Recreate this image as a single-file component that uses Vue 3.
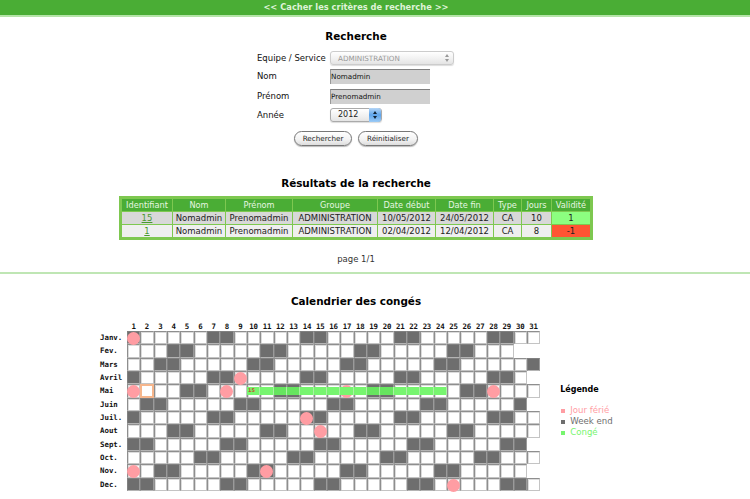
<script setup>
const months = ['Janv.', 'Fev.', 'Mars', 'Avril', 'Mai', 'Juin', 'Juil.', 'Aout', 'Sept.', 'Oct.', 'Nov.', 'Dec.']
const feries = { 0: [1], 3: [9], 4: [1, 8, 17, 28], 6: [14], 7: [15], 10: [1, 11], 11: [25] }
const days = Array.from({ length: 31 }, (_, i) => i + 1)

function cellsFor(m) {
  const count = new Date(2012, m + 1, 0).getDate()
  return days.map((d) => {
    if (d > count) return { d, cls: ['cell', 'none'] }
    const wd = new Date(2012, m, d).getDay()
    const conge = m === 4 && d >= 10 && d <= 24
    return {
      d,
      cls: ['cell', { we: wd === 0 || wd === 6, today: m === 4 && d === 2 }],
      ferie: (feries[m] || []).includes(d),
      conge,
      first: m === 4 && d === 10
    }
  })
}
const rows = months.map((name, m) => ({ name, cells: cellsFor(m) }))

const results = [
  { id: '15', nom: 'Nomadmin', prenom: 'Prenomadmin', groupe: 'ADMINISTRATION', debut: '10/05/2012', fin: '24/05/2012', type: 'CA', jours: '10', val: '1', vc: 'ok', rc: 'odd' },
  { id: '1', nom: 'Nomadmin', prenom: 'Prenomadmin', groupe: 'ADMINISTRATION', debut: '02/04/2012', fin: '12/04/2012', type: 'CA', jours: '8', val: '-1', vc: 'ko', rc: 'even' }
]
</script>

<template>
  <div class="page">
    <div class="topbar"><span class="inner">&lt;&lt; Cacher les critères de recherche &gt;&gt;</span></div>

    <h2 class="h-search">Recherche</h2>
    <form class="form" @submit.prevent>
      <div class="frow r1">
        <span class="lab">Equipe / Service</span>
        <div class="sel sel-big"><span>ADMINISTRATION</span>
          <svg width="6" height="10" viewBox="0 0 6 10"><path d="M3 1l2 3H1zM3 9L1 6h4z" fill="#999" /></svg>
        </div>
      </div>
      <div class="frow r2"><span class="lab">Nom</span><div class="inp">Nomadmin</div></div>
      <div class="frow r3"><span class="lab">Prénom</span><div class="inp">Prenomadmin</div></div>
      <div class="frow r4">
        <span class="lab">Année</span>
        <div class="sel sel-year"><span>2012</span>
          <i class="spin"><svg width="6" height="10" viewBox="0 0 6 10"><path d="M3 1l2 3H1zM3 9L1 6h4z" fill="#123" /></svg></i>
        </div>
      </div>
      <div class="btns">
        <button type="button" class="btn b1">Rechercher</button>
        <button type="button" class="btn b2">Réinitialiser</button>
      </div>
    </form>

    <h2 class="h-res">Résultats de la recherche</h2>
    <div class="tablewrap">
      <table class="res">
        <thead>
          <tr>
            <th class="c1">Identifiant</th><th class="c2">Nom</th><th class="c3">Prénom</th><th class="c4">Groupe</th>
            <th class="c5">Date début</th><th class="c6">Date fin</th><th class="c7">Type</th><th class="c8">Jours</th><th class="c9">Validité</th>
          </tr>
        </thead>
        <tbody>
          <tr v-for="r in results" :key="r.id" :class="r.rc">
            <td><a href="#" @click.prevent>{{ r.id }}</a></td>
            <td>{{ r.nom }}</td><td>{{ r.prenom }}</td><td>{{ r.groupe }}</td>
            <td>{{ r.debut }}</td><td>{{ r.fin }}</td><td>{{ r.type }}</td><td>{{ r.jours }}</td>
            <td :class="r.vc">{{ r.val }}</td>
          </tr>
        </tbody>
      </table>
    </div>
    <div class="pager">page 1/1</div>
    <div class="sep"></div>

    <h2 class="h-cal">Calendrier des congés</h2>
    <div class="calzone">
      <div class="cal">
        <div class="crow head">
          <span class="mon"></span>
          <span v-for="d in days" :key="d" class="num">{{ d }}</span>
        </div>
        <div v-for="r in rows" :key="r.name" class="crow">
          <span class="mon">{{ r.name }}</span>
          <span v-for="c in r.cells" :key="c.d" :class="c.cls">
            <i v-if="c.ferie" class="dot"></i>
            <i v-if="c.conge" class="band"></i>
            <b v-if="c.first" class="tag">15</b>
          </span>
        </div>
      </div>
      <div class="legend">
        <div class="leg-t">Légende</div>
        <div class="leg-i l-f"><i></i>Jour férié</div>
        <div class="leg-i l-w"><i></i>Week end</div>
        <div class="leg-i l-c"><i></i>Congé</div>
      </div>
    </div>
  </div>
</template>

<style>
html, body { margin: 0; background: #fff; overflow: hidden; }
</style>

<style scoped>
.page { width: 750px; height: 499px; overflow: hidden; font-family: "DejaVu Sans", Verdana, sans-serif; color: #111; font-size: 9px; }
.topbar { height: 15px; background: #4aad35; border-bottom: 2px solid #b5e4a8; color: #dff3d8; font-weight: bold; font-size: 8.3px; line-height: 15px; }
.inner { display: block; width: 712px; text-align: center; }
h2 { margin: 0; width: 712px; text-align: center; font-size: 10.4px; font-weight: bold; color: #000; line-height: 14px; }
.h-search { margin-top: 12px; }
.form { display: flex; flex-direction: column; width: 200px; margin: 7px 0 0 257px; }
.frow { display: flex; align-items: center; }
.lab { width: 73px; flex: none; font-size: 8.5px; }
.r1 { height: 16px; }
.r2 { height: 20px; }
.r3 { height: 20px; }
.r4 { height: 17px; }
.sel { height: 14px; box-sizing: border-box; border: 1px solid #ccc; border-radius: 3px; background: linear-gradient(#fff, #f0f0f0 60%, #e4e4e4); display: flex; align-items: center; justify-content: space-between; padding-left: 7px; font-size: 7.2px; box-shadow: 0 1px 1px #ddd; }
.sel-big { width: 124px; color: #999; padding-right: 3px; }
.sel-year { width: 52px; color: #222; border-color: #aaa; font-size: 8px; }
.spin { width: 12px; height: 14px; background: linear-gradient(#b5d6f7, #5ea4ea 50%, #9ccbf6); border-radius: 0 3px 3px 0; display: flex; align-items: center; justify-content: center; }
.inp { width: 100px; height: 15px; box-sizing: border-box; background: #d0d0d0; border-top: 1px solid #808080; border-left: 1px solid #999; font-size: 7.2px; line-height: 14px; color: #111; }
.btns { display: flex; gap: 6px; margin: 8px 0 0 37px; }
.btn { height: 15px; box-sizing: border-box; padding: 0; border: 1px solid #777; border-radius: 8px; background: linear-gradient(#fff, #f2f2f2 60%, #ddd); font: 7.2px "DejaVu Sans", Verdana, sans-serif; color: #222; box-shadow: 0 1px 1px #bbb; }
.b1 { width: 58px; }
.b2 { width: 60px; }
.h-res { margin-top: 30px; }
.tablewrap { display: flex; justify-content: center; width: 712px; margin-top: 6px; }
.res { border-collapse: separate; border-spacing: 1px; background: #7ec850; border: 2px solid #7ec850; table-layout: fixed; width: 474px; font-size: 8.5px; }
.res th { background: #4aad35; color: #e6f6e0; font-weight: normal; font-size: 8.2px; height: 12px; padding: 0; line-height: 12px; text-align: center; }
.res td { height: 12px; padding: 0; line-height: 12px; text-align: center; color: #222; white-space: nowrap; overflow: hidden; }
.res .odd td { background: #d8d8d8; }
.res .even td { background: #efefef; }
.res td.ok, .res .odd td.ok { background: #8cff80; }
.res td.ko, .res .even td.ko { background: #ff5533; }
.res a { color: #4a9a30; }
.c1 { width: 50px; } .c2 { width: 52px; } .c3 { width: 66px; } .c4 { width: 84px; } .c5 { width: 57px; } .c6 { width: 57px; } .c7 { width: 27px; } .c8 { width: 29px; } .c9 { width: 38px; }
.pager { width: 712px; text-align: center; font-size: 8.5px; color: #333; margin-top: 13px; height: 12px; line-height: 12px; }
.sep { height: 2px; margin-top: 7px; background: #bfe6b4; }
.h-cal { margin-top: 20px; }
.calzone { display: flex; margin-top: 14px; padding-left: 100px; align-items: flex-start; }
.cal { flex: none; }
.crow { display: flex; height: 13.33px; }
.head { height: 9px; }
.mon { width: 27px; flex: none; font-family: "DejaVu Sans Mono", monospace; font-weight: bold; font-size: 7.4px; line-height: 13px; }
.num { width: 13.33px; flex: none; text-align: center; font-family: "DejaVu Sans Mono", monospace; font-weight: bold; font-size: 7.4px; line-height: 10px; letter-spacing: -.2px; }
.cell { position: relative; width: 13.33px; height: 13.33px; flex: none; box-sizing: border-box; background: #fff; border: 1px solid #8e8e8e; border-right-color: #c4c4c4; border-bottom-color: #c4c4c4; box-shadow: inset 1px 1px 0 #dcdcdc; }
.cell.none { background: #fff; border: 0; box-shadow: none; }
.cell.we { background: #6e6e6e; border-color: #808080; border-right-color: #9a9a9a; border-bottom-color: #b4b4b4; box-shadow: none; }
.cell.today { border: 2px solid #f6b68c; box-shadow: inset 0 0 0 0 transparent; }
.dot { position: absolute; left: -1px; top: 0; width: 13px; height: 13px; border-radius: 50%; background: #ff9da3; z-index: 1; }
.band { position: absolute; left: -1px; right: -1px; top: 2px; height: 8px; background: #77f56f; border-right: 1px solid #a9f2a3; box-sizing: border-box; z-index: 2; }
.cell.we .band { background: #66e55f; }
.tag { position: absolute; left: 0; top: 2px; font: bold 5px/7px "DejaVu Sans", sans-serif; color: #c4502c; z-index: 3; }
.legend { margin-left: 20px; margin-top: 62px; font-size: 8.6px; }
.leg-t { font-weight: bold; color: #000; font-size: 8px; line-height: 11px; margin-bottom: 10px; }
.leg-i { height: 11px; line-height: 11px; display: flex; align-items: center; gap: 5px; padding-left: 1px; }
.leg-i i { width: 4px; height: 4px; }
.l-f { color: #ff9da3; } .l-f i { background: #ff9da3; }
.l-w { color: #6e6e6e; } .l-w i { background: #6e6e6e; }
.l-c { color: #77f56f; } .l-c i { background: #77f56f; }
</style>
